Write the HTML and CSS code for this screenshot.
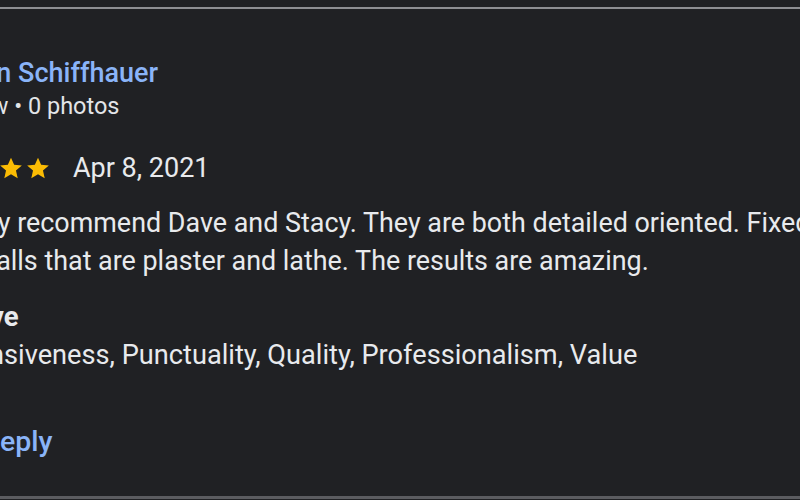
FILE: index.html
```html
<!DOCTYPE html>
<html lang="en">
<head>
<meta charset="utf-8">
<title>Review</title>
<link rel="stylesheet" href="styles.css">
</head>
<body>
<div class="card">
  <div class="review">
    <div class="name">Steven Schiffhauer</div>
    <div class="meta">1 review • 0 photos</div>
    <div class="rating">
      <div class="stars">
        <svg class="star" viewBox="0 0 24 24"><path d="M12 2.5l2.9 6.6 7.1.6-5.4 4.7 1.6 7-6.2-3.7-6.2 3.7 1.6-7L2 9.7l7.1-.6z"/></svg>
        <svg class="star" viewBox="0 0 24 24"><path d="M12 2.5l2.9 6.6 7.1.6-5.4 4.7 1.6 7-6.2-3.7-6.2 3.7 1.6-7L2 9.7l7.1-.6z"/></svg>
        <svg class="star" viewBox="0 0 24 24"><path d="M12 2.5l2.9 6.6 7.1.6-5.4 4.7 1.6 7-6.2-3.7-6.2 3.7 1.6-7L2 9.7l7.1-.6z"/></svg>
        <svg class="star" viewBox="0 0 24 24"><path d="M12 2.5l2.9 6.6 7.1.6-5.4 4.7 1.6 7-6.2-3.7-6.2 3.7 1.6-7L2 9.7l7.1-.6z"/></svg>
        <svg class="star" viewBox="0 0 24 24"><path d="M12 2.5l2.9 6.6 7.1.6-5.4 4.7 1.6 7-6.2-3.7-6.2 3.7 1.6-7L2 9.7l7.1-.6z"/></svg>
      </div>
      <span class="date">Apr 8, 2021</span>
    </div>
    <div class="body">
      <div class="line first">I highly recommend Dave and Stacy. They are both detailed oriented. Fixed</div>
      <div class="line second">our walls that are plaster and lathe. The results are amazing.</div>
    </div>
    <div class="label">Positive</div>
    <div class="tags">Responsiveness, Punctuality, Quality, Professionalism, Value</div>
    <div class="reply">Reply</div>
  </div>
</div>
</body>
</html>
```
FILE: styles.css
```css
html, body {
  margin: 0;
  padding: 0;
  background: #202124;
  width: 800px;
  height: 500px;
  overflow: hidden;
}
body {
  font-family: Roboto, "Liberation Sans", sans-serif;
  color: #e8eaed;
  padding-top: 7px;
  box-sizing: border-box;
}
.card {
  border-top: 2px solid #8e8f93;
  border-bottom: 3px solid #5b5c60;
  height: 492px;
  box-sizing: border-box;
  overflow: hidden;
}
.review {
  margin-left: -80px;
  padding-top: 46px;
  white-space: nowrap;
}
.name {
  margin-left: 9px;
  font-size: 27px;
  line-height: 36px;
  font-weight: 500;
  color: #8ab4f8;
}
.meta {
  margin-left: 2px;
  font-size: 23.5px;
  line-height: 30px;
  color: #e3e5e8;
}
.rating {
  display: flex;
  align-items: center;
  gap: 22px;
  margin-top: 28px;
  height: 38px;
}
.stars {
  display: flex;
  gap: 1px;
  margin-left: -3px;
}
.star {
  width: 26px;
  height: 26px;
  fill: #fbbc04;
}
.date {
  font-size: 27px;
  line-height: 38px;
}
.body {
  margin-top: 17px;
  line-height: 38px;
}
.first {
  margin-left: 6px;
  font-size: 26.9px;
}
.second {
  margin-left: 10px;
  font-size: 26.9px;
}
.label {
  margin-top: 18px;
  margin-left: -1px;
  font-size: 27.5px;
  line-height: 38px;
  font-weight: 700;
}
.tags {
  margin-left: -7px;
  font-size: 27.2px;
  line-height: 38px;
}
.reply {
  margin-top: 49px;
  margin-left: 62px;
  font-size: 28.5px;
  line-height: 38px;
  font-weight: 500;
  color: #8ab4f8;
}
```
